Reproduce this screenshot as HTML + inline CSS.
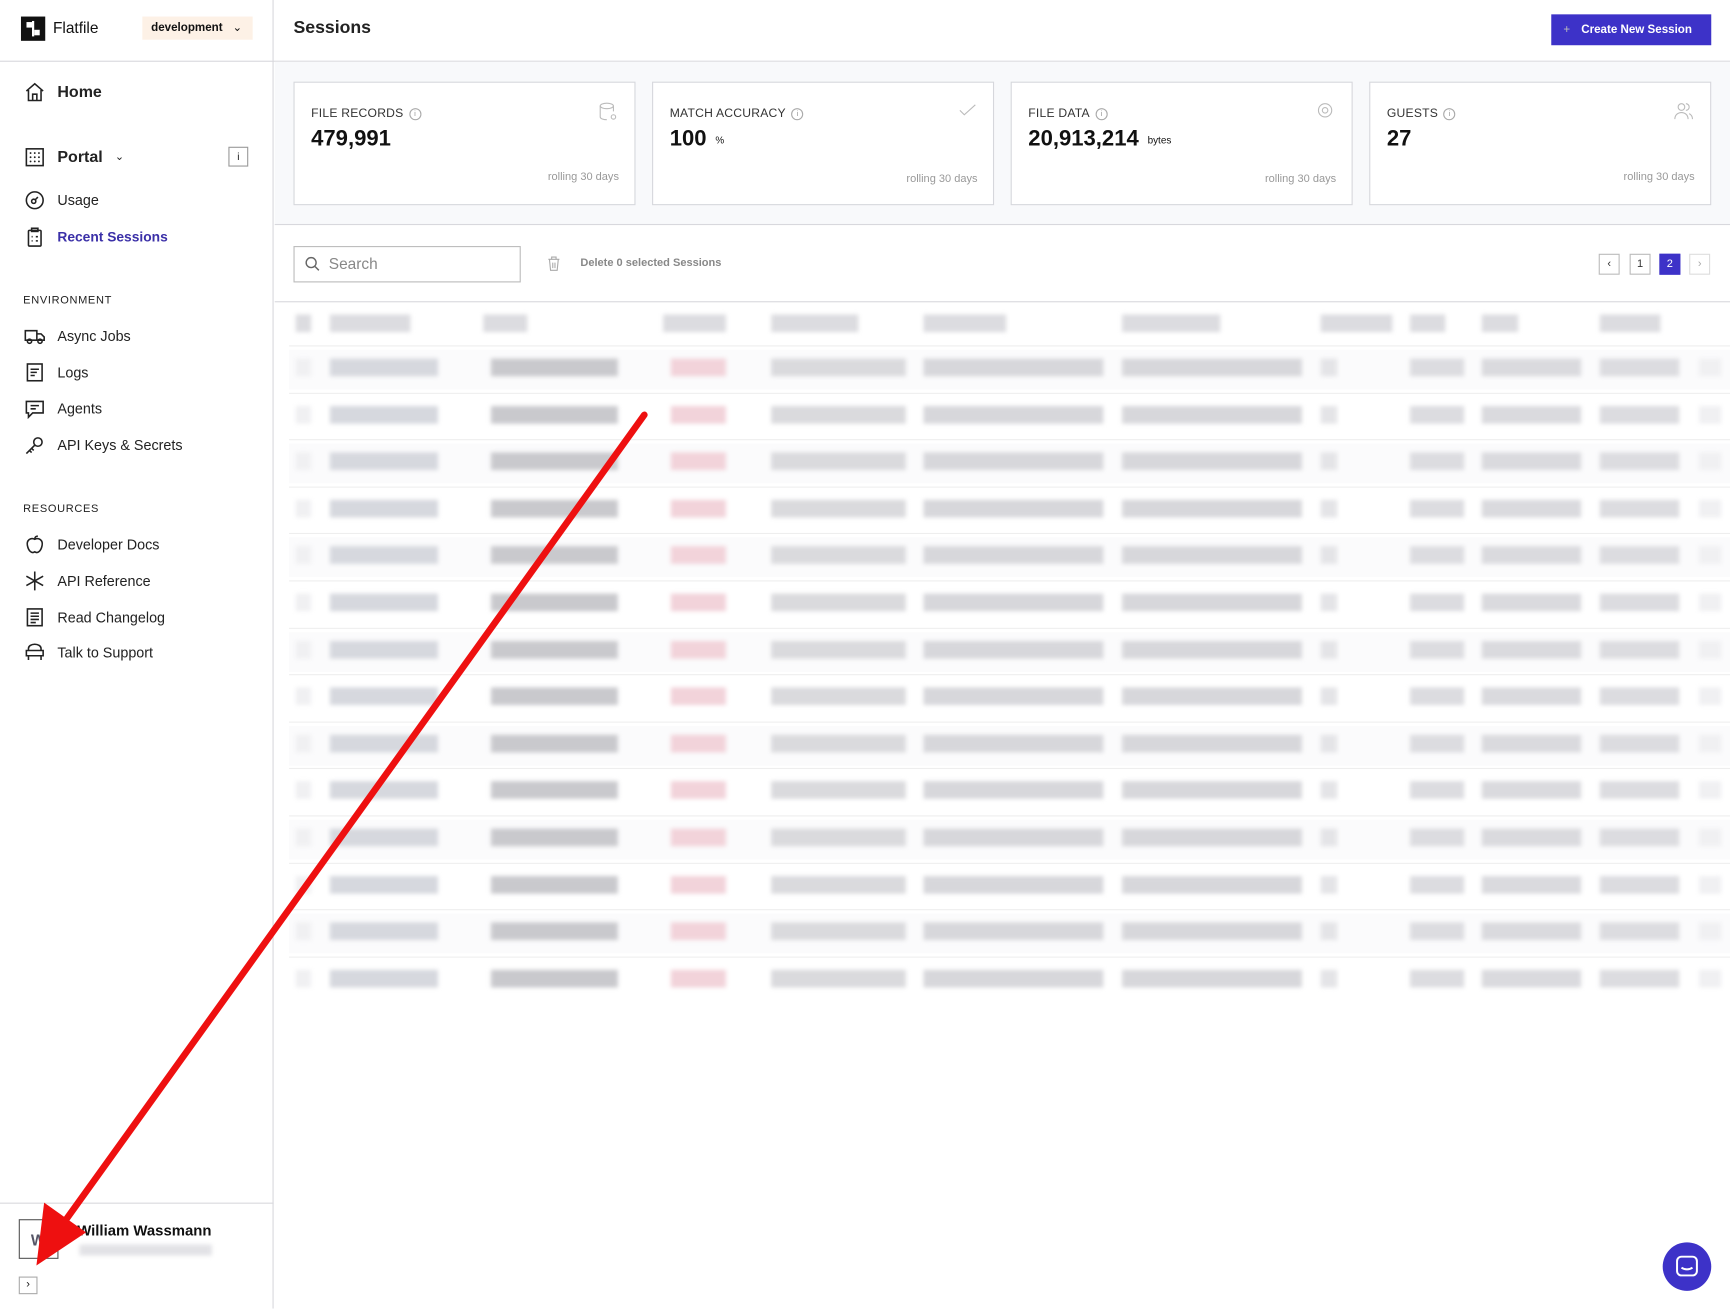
<!DOCTYPE html>
<html><head><meta charset="utf-8"><style>
*{box-sizing:border-box;margin:0;padding:0}
html,body{width:1730px;height:1308px;overflow:hidden;background:#fff}
#w{position:absolute;left:0;top:0;width:1568px;height:1186px;transform:scale(1.10332);transform-origin:0 0;font-family:"Liberation Sans",sans-serif;color:#111}
.a{position:absolute}
.side{left:0;top:0;width:248px;height:1186px;border-right:1px solid #d8d8dd}
.nav{position:absolute;left:22px;font-size:13px;display:flex;align-items:center;gap:11px;color:#222}
.nav svg{width:19px;height:19px;fill:none;stroke:#222;stroke-width:1.5}
.sec{position:absolute;left:21px;font-size:10px;letter-spacing:.6px;color:#222}
.card{position:absolute;top:74px;width:310px;height:112px;background:#fff;border:1px solid #d6d7dc}
.card .l{position:absolute;left:15px;top:22px;font-size:11px;letter-spacing:.2px;color:#333}
.card .v{position:absolute;left:15px;top:40px;font-size:20px;font-weight:bold;color:#111}
.card .v small{font-size:9px;font-weight:normal;margin-left:8px;vertical-align:middle}
.card .r{position:absolute;right:14px;top:80px;font-size:10px;color:#999}
.info{display:inline-block;width:11px;height:11px;border:1px solid #aaa;border-radius:50%;font-size:7px;text-align:center;line-height:9px;color:#999;margin-left:5px;vertical-align:1px}
.b{position:absolute;height:16px;filter:blur(2px)}
.pg{position:absolute;top:230px;width:19px;height:19px;border:1px solid #bbb;font-size:10px;text-align:center;line-height:17px;color:#333}
</style></head><body><div id="w">
<div class="a side"></div>
<div class="a" style="left:19px;top:15px;width:22px;height:22px;background:#111"></div>
<div class="a" style="left:24px;top:20px;width:5px;height:5px;background:#fff"></div><div class="a" style="left:31px;top:27px;width:5px;height:5px;background:#fff"></div><div class="a" style="left:29px;top:19px;width:1.5px;height:14px;background:#fff"></div>
<div class="a" style="left:48px;top:17px;font-size:14px">Flatfile</div>
<div class="a" style="left:129px;top:15px;width:100px;height:21px;background:#fdf1e6;font-size:10.5px;font-weight:bold;line-height:21px;padding-left:8px">development <span style="font-weight:normal;margin-left:6px">&#8964;</span></div>
<div class="a" style="left:0;top:55px;width:1568px;height:1px;background:#d8d8dd"></div>
<div class="a" style="left:266px;top:17px;font-size:16px;font-weight:bold;color:#222">Sessions</div>
<div class="a" style="left:1406px;top:13px;width:145px;height:28px;background:#3d32c8;color:#fff;font-size:10.5px;font-weight:bold;line-height:28px;padding-left:11px"><span style="font-weight:normal;margin-right:10px;color:#bbb">+</span>Create New Session</div>

<div class="nav" style="top:74px;font-size:14.5px;font-weight:bold"><svg viewBox="0 0 20 20"><path d="M2 9L10 2l8 7M4 8v10h12V8M8 18v-6h4v6"/></svg>Home</div>
<div class="nav" style="top:133px;font-size:14.5px;font-weight:bold"><svg viewBox="0 0 20 20"><rect x="2" y="2" width="16" height="16"/><path d="M6 6h0M10 6h0M14 6h0M6 10h0M10 10h0M14 10h0M6 14h0M10 14h0M14 14h0" stroke-linecap="round" stroke-width="1.8"/></svg>Portal <span style="font-size:10px;font-weight:normal">&#8964;</span></div>
<div class="a" style="left:207px;top:133px;width:18px;height:18px;border:1px solid #999;font-size:9px;text-align:center;line-height:16px">i</div>
<div class="nav" style="top:172px"><svg viewBox="0 0 20 20"><circle cx="10" cy="10" r="8"/><circle cx="9" cy="11" r="2"/><path d="M10 10l3-3"/></svg>Usage</div>
<div class="nav" style="top:205px;color:#3b30a8;font-weight:bold;font-size:12.5px"><svg viewBox="0 0 20 20"><rect x="4" y="4" width="12" height="15" rx="1"/><rect x="7" y="2" width="6" height="3"/><path d="M7 10h1M11 10h2M7 14h1M11 14h2"/></svg>Recent Sessions</div>
<div class="sec" style="top:267px">ENVIRONMENT</div>
<div class="nav" style="top:295px"><svg viewBox="0 0 20 20"><path d="M1 5h11v9H1zM12 8h4l3 3v3h-7"/><circle cx="5" cy="15" r="2"/><circle cx="15" cy="15" r="2"/></svg>Async Jobs</div>
<div class="nav" style="top:328px"><svg viewBox="0 0 20 20"><rect x="3" y="2" width="14" height="16"/><path d="M6 7h8M6 10h6M6 13h4"/></svg>Logs</div>
<div class="nav" style="top:361px"><svg viewBox="0 0 20 20"><path d="M2 3h16v11H8l-4 4v-4H2z"/><path d="M6 7h8M6 10h5"/></svg>Agents</div>
<div class="nav" style="top:394px"><svg viewBox="0 0 20 20"><circle cx="13" cy="7" r="4"/><path d="M10 10l-8 8M5 15l2 2M7 13l2 2"/></svg>API Keys &amp; Secrets</div>
<div class="sec" style="top:456px">RESOURCES</div>
<div class="nav" style="top:484px"><svg viewBox="0 0 20 20"><path d="M10 5c-4-2-8 1-7 6s4 8 7 6c3 2 6-1 7-6s-3-8-7-6zM10 5c0-2 1-3 3-3"/></svg>Developer Docs</div>
<div class="nav" style="top:517px"><svg viewBox="0 0 20 20"><path d="M10 1v18M2 5.5l16 9M2 14.5l16-9"/></svg>API Reference</div>
<div class="nav" style="top:550px"><svg viewBox="0 0 20 20"><rect x="3" y="2" width="14" height="16"/><path d="M6 6h8M6 9h8M6 12h8M6 15h5"/></svg>Read Changelog</div>
<div class="nav" style="top:582px"><svg viewBox="0 0 20 20"><path d="M4 8V6a6 4 0 0 1 12 0v2M2 8h16v5H2zM4 13v4M16 13v4"/></svg>Talk to Support</div>
<div class="a" style="left:0;top:1090px;width:248px;height:1px;background:#d8d8dd"></div>
<div class="a" style="left:17px;top:1105px;width:36px;height:36px;border:1px solid #555;font-size:14px;color:#556;font-weight:bold;line-height:36px;padding-left:10px">W</div>
<div class="a" style="left:70px;top:1108px;font-size:13.5px;font-weight:bold;color:#111">William Wassmann</div>
<div class="b" style="left:72px;top:1128px;width:120px;height:10px;background:#e2e2e6"></div>
<div class="a" style="left:17px;top:1157px;width:17px;height:16px;border:1px solid #aaa;font-size:10px;text-align:center;line-height:14px">›</div>

<div class="a" style="left:249px;top:56px;width:1319px;height:148px;background:#f8f9fb;border-bottom:1px solid #d8d8dd"></div>
<div class="card" style="left:266px"><div class="l">FILE RECORDS<span class="info">i</span></div><div class="v">479,991</div><div class="r">rolling 30 days</div><svg class="a" style="right:15px;top:17px" width="18" height="18" viewBox="0 0 18 18" fill="none" stroke="#bbb"><ellipse cx="8" cy="4" rx="6" ry="2.5"/><path d="M2 4v10c0 1.5 3 2.5 6 2.5M14 4v5"/><circle cx="14" cy="14" r="2"/></svg></div>
<div class="card" style="left:591px"><div class="l">MATCH ACCURACY<span class="info">i</span></div><div class="v">100<small>%</small></div><div class="r" style="top:82px">rolling 30 days</div><svg class="a" style="right:15px;top:19px" width="16" height="12" viewBox="0 0 16 12" fill="none" stroke="#bbb"><path d="M1 6l4 4 10-9"/></svg></div>
<div class="card" style="left:916px"><div class="l">FILE DATA<span class="info">i</span></div><div class="v">20,913,214<small>bytes</small></div><div class="r" style="top:82px">rolling 30 days</div><svg class="a" style="right:15px;top:17px" width="18" height="16" viewBox="0 0 18 16" fill="none" stroke="#bbb"><circle cx="9" cy="8" r="6"/><circle cx="9" cy="8" r="2.5"/></svg></div>
<div class="card" style="left:1241px"><div class="l">GUESTS<span class="info">i</span></div><div class="v">27</div><div class="r">rolling 30 days</div><svg class="a" style="right:15px;top:17px" width="18" height="18" viewBox="0 0 18 18" fill="none" stroke="#bbb"><circle cx="7" cy="5" r="3"/><path d="M1 16c0-4 3-6 6-6s6 2 6 6M11 2a3 3 0 0 1 0 6M14 11c2 1 3 3 3 5"/></svg></div>

<div class="a" style="left:266px;top:223px;width:206px;height:33px;border:1px solid #bbb;font-size:14px;color:#888;line-height:31px;padding-left:31px">Search</div>
<svg class="a" style="left:276px;top:232px" width="14" height="14" viewBox="0 0 14 14" fill="none" stroke="#666" stroke-width="1.3"><circle cx="6" cy="6" r="4.5"/><path d="M9.5 9.5L13 13"/></svg>
<svg class="a" style="left:496px;top:232px" width="12" height="14" viewBox="0 0 12 14" fill="none" stroke="#aaa"><path d="M1 3h10M4 3V1h4v2M2 3l1 10h6l1-10M5 6v5M7 6v5"/></svg>
<div class="a" style="left:526px;top:233px;font-size:10px;font-weight:bold;color:#888">Delete 0 selected Sessions</div>
<div class="pg" style="left:1449px">‹</div><div class="pg" style="left:1477px">1</div><div class="pg" style="left:1504px;background:#3d32c8;border-color:#3d32c8;color:#fff">2</div><div class="pg" style="left:1531px;border-color:#ddd;color:#aaa">›</div>
<div class="a" style="left:249px;top:273px;width:1319px;height:1px;background:#d8d8dd"></div>
<div id="t"></div>

<div class="a" style="left:1507px;top:1126px;width:44px;height:44px;border-radius:50%;background:#3d32c8"></div>
<svg class="a" style="left:1518px;top:1137px" width="22" height="22" viewBox="0 0 22 22" fill="none" stroke="#fff" stroke-width="1.8"><rect x="2" y="2" width="18" height="17" rx="4"/><path d="M6 12c3 2 7 2 10 0"/></svg>

<svg class="a" style="left:0;top:0" width="1568" height="1186"><line x1="584" y1="376" x2="58" y2="1108" stroke="#ee1010" stroke-width="6" stroke-linecap="round"/><polygon points="33,1147 40,1090 78,1117" fill="#ee1010"/></svg>
</div>
<script>
var t=document.getElementById('t'),h='';
var hd=[[268,14],[299,73],[438,40],[601,57],[699,79],[837,75],[1017,89],[1197,65],[1278,32],[1343,33],[1450,55]];
hd.forEach(function(c){h+='<div class="b" style="left:'+c[0]+'px;top:285px;width:'+c[1]+'px;background:#dcdce0"></div>'});
var rc=[[268,14,'#f0f0f2'],[299,98,'#d6d8de'],[445,115,'#c9c9cd'],[608,50,'#f2d3da'],[699,122,'#dadadd'],[837,163,'#d7d7db'],[1017,163,'#d7d7db'],[1197,15,'#e4e4e7'],[1278,49,'#dcdce0'],[1343,90,'#dadade'],[1450,72,'#dcdce0'],[1540,20,'#f0f0f2']];
for(var i=0;i<14;i++){var y=325+i*42.6;
h+='<div class="a" style="left:262px;top:'+(y-12)+'px;width:1306px;height:1px;background:#eee"></div>';
if(i%2==0)h+='<div class="a" style="left:262px;top:'+(y-8)+'px;width:1306px;height:36px;background:#fbfbfc"></div>';
rc.forEach(function(c){h+='<div class="b" style="left:'+c[0]+'px;top:'+y+'px;width:'+c[1]+'px;background:'+c[2]+'"></div>'});}
t.innerHTML=h;
</script>
</body></html>
